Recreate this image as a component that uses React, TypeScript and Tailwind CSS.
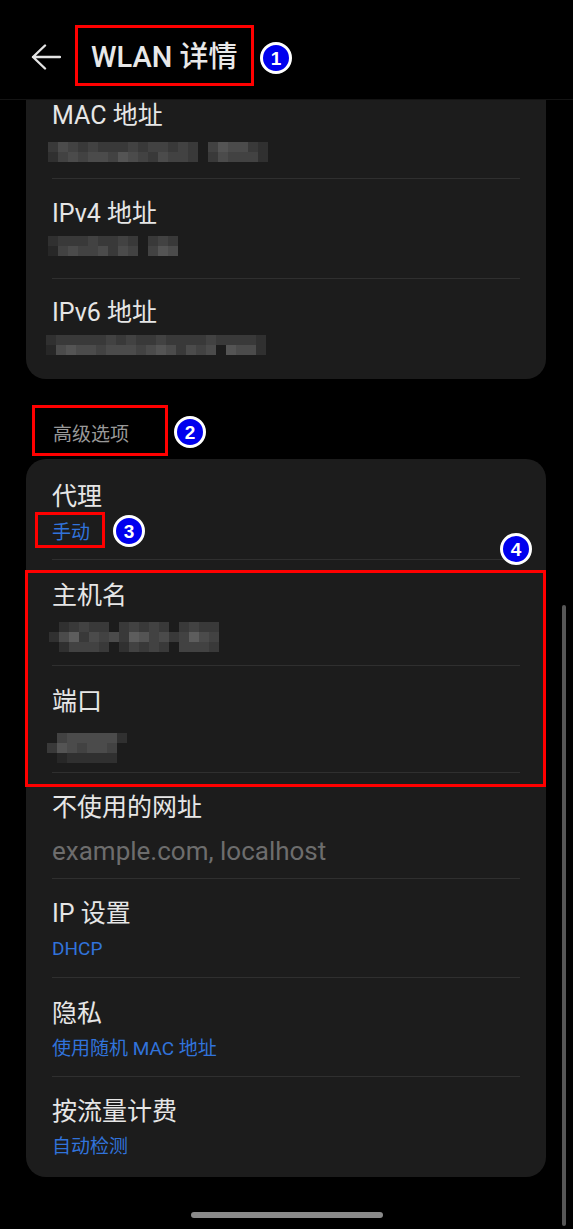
import React from "react";

const FONT = "font-['Roboto','Noto_Sans_CJK_SC',sans-serif]";

// rows of brightness digits, 0 = empty cell
type MosaicProps = { rows: string[]; cell?: number; shift?: number };

function Mosaic({ rows, cell = 10, shift = 0 }: MosaicProps) {
  const cols = Math.max(...rows.map((r) => r.length));
  return (
    <svg
      width={cols * cell}
      height={rows.length * cell}
      className="block"
      style={{ marginLeft: shift }}
    >
      {rows.map((row, y) =>
        row.split("").map((ch, x) => {
          const level = Number(ch);
          if (!level) return null;
          const g = 30 + level * 9;
          return (
            <rect
              key={`${x}-${y}`}
              x={x * cell}
              y={y * cell}
              width={cell}
              height={cell}
              fill={`rgb(${g},${g},${g})`}
            />
          );
        })
      )}
    </svg>
  );
}

function Badge({ n, className }: { n: number; className: string }) {
  return (
    <div
      className={`absolute flex h-[32px] w-[32px] items-center justify-center rounded-full border-[3px] border-white bg-[#0000ee] font-['Liberation_Sans',sans-serif] text-[19px] font-bold leading-none text-white ${className}`}
    >
      {n}
    </div>
  );
}

type RowProps = {
  label: string;
  h: string;
  pt: string;
  first?: boolean;
  children?: React.ReactNode;
};

function Row({ label, h, pt, first, children }: RowProps) {
  return (
    <div className={`flex flex-col ${h} ${pt} ${first ? "" : "border-t border-[#2f2f2f]"}`}>
      <div className="text-[25px] leading-[28px] text-[#e6e6e6]">{label}</div>
      {children}
    </div>
  );
}

function Blue({ text }: { text: string }) {
  return <div className="mt-[9px] text-[19px] leading-[24px] text-[#3173db]">{text}</div>;
}

export default function App() {
  return (
    <div className={`relative h-[1229px] w-[573px] overflow-hidden bg-black ${FONT}`}>
      <header className="flex h-[100px] items-center border-b border-[#141414] pb-[1px] pl-[31px] pt-[16px]">
        <svg width="30" height="26" viewBox="0 0 30 26" fill="none">
          <path
            d="M29 13H2M14 1.5L2 13l12 11.5"
            stroke="#e4e4e4"
            strokeWidth="2.4"
            strokeLinecap="round"
            strokeLinejoin="round"
          />
        </svg>
        <h1 className="ml-[30px] text-[29px] font-medium leading-[32px] text-[#e8e8e8]">
          WLAN 详情
        </h1>
      </header>

      <main>
        <section className="ml-[26px] w-[520px] rounded-b-[20px] bg-[#1c1c1c] px-[26px]">
          <Row label="MAC 地址" h="h-[78px]" pt="pt-[2px]" first>
            <div className="mt-[12px]">
              <Mosaic
                shift={-4}
                rows={["3543433343443430465532", "2454554654354430354442"]}
              />
            </div>
          </Row>
          <Row label="IPv4 地址" h="h-[100px]" pt="pt-[21px]">
            <div className="mt-[8px]">
              <Mosaic shift={-4} rows={["2333433430343", "1454453540465"]} />
            </div>
          </Row>
          <Row label="IPv6 地址" h="h-[101px]" pt="pt-[20px]">
            <div className="mt-[8px]">
              <Mosaic
                shift={-6}
                rows={["2333334343343333433332", "1565545554565354506552"]}
              />
            </div>
          </Row>
        </section>

        <div className="ml-[53px] mt-[44px] mb-[12px] text-[19px] leading-[24px] text-[#999999]">
          高级选项
        </div>

        <section className="ml-[26px] w-[520px] rounded-[20px] bg-[#1c1c1c] px-[26px]">
          <Row label="代理" h="h-[100px]" pt="pt-[24px]" first>
            <div className="mt-[10px] text-[19px] leading-[24px] text-[#3173db]">手动</div>
          </Row>
          <Row label="主机名" h="h-[106px]" pt="pt-[22px]">
            <div className="mt-[12px]">
              <Mosaic
                shift={-3}
                cell={10}
                rows={["02343303434303433", "25735453764534754", "02444302434304443"]}
              />
            </div>
          </Row>
          <Row label="端口" h="h-[107px]" pt="pt-[22px]">
            <div className="mt-[17px]">
              <Mosaic shift={-5} rows={["04555552", "36545540", "01222220"]} />
            </div>
          </Row>
          <Row label="不使用的网址" h="h-[106px]" pt="pt-[21px]">
            <div className="mt-[14px] text-[26px] leading-[30px] text-[#6d6d6d]">
              example.com, localhost
            </div>
          </Row>
          <Row label="IP 设置" h="h-[99px]" pt="pt-[21px]">
            <Blue text="DHCP" />
          </Row>
          <Row label="隐私" h="h-[99px]" pt="pt-[22px]">
            <Blue text="使用随机 MAC 地址" />
          </Row>
          <Row label="按流量计费" h="h-[101px]" pt="pt-[21px]">
            <Blue text="自动检测" />
          </Row>
        </section>
      </main>

      <div className="mx-auto mt-[35px] h-[6px] w-[192px] rounded-full bg-[#8a8a8a]" />

      {/* scrollbar */}
      <div className="absolute left-[562px] top-[605px] h-[621px] w-[4px] rounded-full bg-[#575757]" />

      {/* annotation overlays */}
      <div className="absolute left-[75px] top-[25px] h-[61px] w-[179px] border-[3px] border-[#ff0000]" />
      <Badge n={1} className="left-[260px] top-[42px]" />
      <div className="absolute left-[32px] top-[405px] h-[51px] w-[136px] border-[3px] border-[#ff0000]" />
      <Badge n={2} className="left-[174px] top-[416px]" />
      <div className="absolute left-[35px] top-[512px] h-[36px] w-[70px] border-[3px] border-[#ff0000]" />
      <Badge n={3} className="left-[113px] top-[515px]" />
      <Badge n={4} className="left-[500px] top-[533px]" />
      <div className="absolute left-[25px] top-[570px] h-[217px] w-[521px] border-[3px] border-[#ff0000]" />
    </div>
  );
}
